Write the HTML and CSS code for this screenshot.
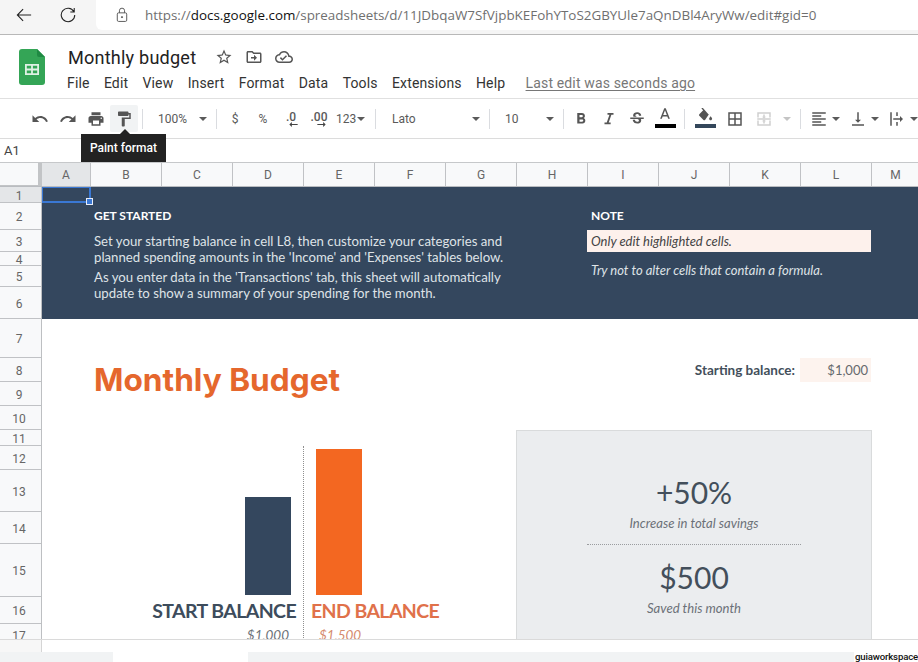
FILE: index.html
```html
<!DOCTYPE html>
<html lang="en">
<head>
<meta charset="utf-8">
<title>Monthly budget - Google Sheets</title>
<link rel="stylesheet" href="styles.css">
</head>
<body>
<div class="app">
  <header class="browser">
    <div class="nav">
      <svg class="nav-icon" viewBox="0 0 18 18"><path d="M17 9H1.5M8 2.5 1.5 9 8 15.5"/></svg>
      <svg class="nav-icon" viewBox="0 0 18 18"><path d="M15.6 5.2A7.6 7.6 0 1 0 16.6 9M16 1.2v4.4h-4.4"/></svg>
    </div>
    <div class="url">
      <svg class="lock" viewBox="0 0 14 18"><rect x="1.5" y="6.5" width="11" height="10" rx="1.5"/><path d="M4 6.5V4a3 3 0 0 1 6 0v2.5"/><circle cx="7" cy="11.5" r=".7"/></svg>
      <span class="url-text">https://<b>docs.google.com</b>/spreadsheets/d/11JDbqaW7SfVjpbKEFohYToS2GBYUle7aQnDBl4AryWw/edit#gid=0</span>
    </div>
  </header>

  <section class="doc">
    <svg class="logo" viewBox="0 0 26 36"><path class="logo-page" d="M3 0h15l8 8v25a3 3 0 0 1-3 3H3a3 3 0 0 1-3-3V3a3 3 0 0 1 3-3z"/><path class="logo-fold" d="M18 0l8 8h-6a2 2 0 0 1-2-2z"/><path class="logo-grid" d="M6 15h14v11H6zm1.8 1.8v2.8h4.3v-2.8zm6.1 0v2.8h4.3v-2.8zm-6.1 4.6v2.8h4.3v-2.8zm6.1 0v2.8h4.3v-2.8z"/></svg>
    <div class="doc-main">
      <div class="title-row">
        <h1 class="title">Monthly budget</h1>
        <svg class="title-icon star" viewBox="0 0 24 24"><path d="M22 9.24l-7.19-.62L12 2 9.19 8.63 2 9.24l5.46 4.73L5.82 21 12 17.27 18.18 21l-1.63-7.03L22 9.24zM12 15.4l-3.76 2.27 1-4.28-3.32-2.88 4.38-.38L12 6.1l1.71 4.04 4.38.38-3.32 2.88 1 4.28L12 15.4z"/></svg>
        <svg class="title-icon" viewBox="0 0 24 24"><path d="M20 6h-8l-2-2H4c-1.1 0-2 .9-2 2v12c0 1.1.9 2 2 2h16c1.1 0 2-.9 2-2V8c0-1.1-.9-2-2-2zm0 12H4V6h5.17l2 2H20v10zm-8-4H8v-2h4V9l4 4-4 4v-3z"/></svg>
        <svg class="title-icon" viewBox="0 0 24 24"><path d="M19.35 10.04C18.67 6.59 15.64 4 12 4 9.11 4 6.6 5.64 5.35 8.04 2.34 8.36 0 10.91 0 14c0 3.31 2.69 6 6 6h13c2.76 0 5-2.24 5-5 0-2.64-2.05-4.78-4.65-4.96zM19 18H6c-2.21 0-4-1.79-4-4 0-2.05 1.53-3.76 3.56-3.97l1.07-.11.5-.95C8.08 7.14 9.94 6 12 6c2.62 0 4.88 1.86 5.39 4.43l.3 1.5 1.53.11c1.56.1 2.78 1.41 2.78 2.96 0 1.65-1.35 3-3 3zm-9-3.82l-2.09-2.09L6.5 13.5 10 17l6.01-6.01-1.41-1.41z"/></svg>
      </div>
      <nav class="menu">
        <span>File</span><span>Edit</span><span>View</span><span>Insert</span><span>Format</span><span>Data</span><span>Tools</span><span>Extensions</span><span>Help</span>
        <a class="last-edit">Last edit was seconds ago</a>
      </nav>
    </div>
  </section>

  <section class="toolbar">
    <div class="tb"><svg viewBox="0 0 24 24"><path d="M12.5 8c-2.65 0-5.05.99-6.9 2.6L2 7v9h9l-3.62-3.62c1.39-1.16 3.16-1.88 5.12-1.88 3.54 0 6.55 2.31 7.6 5.5l2.37-.78C21.08 11.03 17.15 8 12.5 8z"/></svg></div>
    <div class="tb"><svg viewBox="0 0 24 24"><path d="M18.4 10.6C16.55 8.99 14.15 8 11.5 8c-4.65 0-8.58 3.03-9.96 7.22L3.9 16c1.05-3.19 4.05-5.5 7.6-5.5 1.95 0 3.73.72 5.12 1.88L13 16h9V7l-3.6 3.6z"/></svg></div>
    <div class="tb"><svg viewBox="0 0 24 24"><path d="M19 8H5c-1.66 0-3 1.34-3 3v6h4v4h12v-4h4v-6c0-1.66-1.34-3-3-3zm-3 11H8v-5h8v5zm3-7c-.55 0-1-.45-1-1s.45-1 1-1 1 .45 1 1-.45 1-1 1zm-1-9H6v4h12V3z"/></svg></div>
    <div class="tb tb-hover"><svg viewBox="0 0 24 24"><path d="M18 4V3c0-.55-.45-1-1-1H5c-.55 0-1 .45-1 1v4c0 .55.45 1 1 1h12c.55 0 1-.45 1-1V6h1v4H9v11c0 .55.45 1 1 1h2c.55 0 1-.45 1-1v-9h8V4h-3z"/></svg></div>
    <i class="sep sep-a"></i>
    <div class="tb-select tb-zoom"><span>100%</span><i class="caret"></i></div>
    <i class="sep"></i>
    <div class="tb tb-text tb-first">$</div>
    <div class="tb tb-text">%</div>
    <div class="tb tb-dec"><span>.0</span><svg viewBox="0 0 10 6"><path d="M10 2.4H3V0L0 3l3 3V3.6h7z"/></svg></div>
    <div class="tb tb-dec"><span>.00</span><svg viewBox="0 0 10 6"><path d="M0 2.4h7V0l3 3-3 3V3.6H0z"/></svg></div>
    <div class="tb-num"><span>123</span><i class="caret"></i></div>
    <i class="sep sep-a"></i>
    <div class="tb-select tb-font"><span>Lato</span><i class="caret"></i></div>
    <i class="sep"></i>
    <div class="tb-select tb-size"><span>10</span><i class="caret"></i></div>
    <i class="sep"></i>
    <div class="tb tb-bold"><svg viewBox="0 0 24 24"><path d="M15.6 10.79c.97-.67 1.65-1.77 1.65-2.79 0-2.26-1.75-4-4-4H7v14h7.04c2.09 0 3.71-1.7 3.71-3.79 0-1.52-.86-2.82-2.15-3.42zM10 6.5h3c.83 0 1.5.67 1.5 1.5s-.67 1.5-1.5 1.5h-3v-3zm3.5 9H10v-3h3.5c.83 0 1.5.67 1.5 1.5s-.67 1.5-1.5 1.5z"/></svg></div>
    <div class="tb"><svg viewBox="0 0 24 24"><path d="M10 4v2.4h2.6L9 16.6H6V19h8.2v-2.4h-2.6l3.6-10.2H18V4z"/></svg></div>
    <div class="tb"><svg viewBox="0 0 24 24"><path d="M6.85 7.08C6.85 4.37 9.45 3 12.24 3c1.64 0 3 .49 3.9 1.28.77.65 1.46 1.73 1.46 3.24h-3.01c0-.31-.05-.59-.15-.85-.29-.86-1.2-1.28-2.25-1.28-1.86 0-2.34 1.02-2.34 1.7 0 .48.25.88.74 1.21.38.25.77.48 1.41.7H7.39c-.21-.34-.54-.89-.54-1.92zM21 12v-2H3v2h9.62c1.15.45 1.96.75 1.96 1.97 0 1-.81 1.67-2.28 1.67-1.54 0-2.93-.54-2.93-2.51H6.4c0 .55.08 1.13.24 1.58.81 2.29 3.29 3.3 5.67 3.3 2.27 0 5.3-.89 5.3-4.05 0-.3-.01-1.16-.48-1.94H21V12z"/></svg></div>
    <div class="tb tb-color"><svg viewBox="0 0 24 18"><path d="M11 0 5.5 14h2.25l1.12-3h6.25l1.12 3h2.25L13 0h-2zM9.62 9 12 2.67 14.38 9H9.62z"/></svg><b class="swatch swatch-text"></b></div>
    <i class="sep sep-b"></i>
    <div class="tb tb-color tb-fill"><svg viewBox="0 0 24 18"><path d="M16.56 7.94 8.62-1 7.21.41l2.38 2.38-5.15 5.15c-.59.59-.59 1.54 0 2.12l5.5 5.5c.29.29.68.44 1.06.44s.77-.15 1.06-.44l4.5-6.5c.59-.58.59-.53 0-1.12zM19.5 10.5s-2 2.17-2 3.5c0 1.1.9 2 2 2s2-.9 2-2c0-1.33-2-3.5-2-3.5z"/></svg><b class="swatch swatch-fill"></b></div>
    <div class="tb tb-borders"><svg viewBox="0 0 24 24"><path d="M3 3v18h18V3H3zm8 16H5v-6h6v6zm0-8H5V5h6v6zm8 8h-6v-6h6v6zm0-8h-6V5h6v6z"/></svg></div>
    <div class="tb tb-off"><svg viewBox="0 0 24 24"><path d="M3 3h18v2H3zM3 19h18v2H3zM3 5h2v5H3zM19 5h2v5h-2zM3 14h2v5H3zM19 14h2v5h-2zM3 11h18v2H3zM11 6h2v3h2l-3 2-3-2h2zM11 18h2v-3h2l-3-2-3 2h2z"/></svg></div>
    <i class="caret caret-off"></i>
    <i class="sep sep-c"></i>
    <div class="tb tb-align"><svg viewBox="0 0 24 24"><path d="M15 15H3v2h12v-2zm0-8H3v2h12V7zM3 13h18v-2H3v2zm0 8h18v-2H3v2zM3 3v2h18V3H3z"/></svg></div>
    <i class="caret caret-tight"></i>
    <div class="tb tb-align"><svg viewBox="0 0 24 24"><path d="M16 13h-3V3h-2v10H8l4 4 4-4zM4 19v2h16v-2H4z"/></svg></div>
    <i class="caret caret-tight"></i>
    <div class="tb tb-align"><svg viewBox="0 0 24 24"><path d="M3 3h2v18H3zM11 3h2v5h-2zM11 16h2v5h-2zM7 11h9V8l4 4-4 4v-3H7z"/></svg></div>
    <i class="caret caret-tight"></i>
    <div class="tooltip">Paint format</div>
  </section>

  <section class="formula"><span>A1</span></section>

  <main class="sheet">
    <div class="colhead">
      <div class="corner"></div>
      <div class="ch ch-on">A</div><div class="ch">B</div><div class="ch">C</div><div class="ch">D</div><div class="ch">E</div><div class="ch">F</div><div class="ch">G</div><div class="ch">H</div><div class="ch">I</div><div class="ch">J</div><div class="ch">K</div><div class="ch">L</div><div class="ch">M</div>
    </div>
    <div class="sheet-body">
      <div class="rowhead">
        <div class="rh rh-on">1</div><div class="rh">2</div><div class="rh">3</div><div class="rh">4</div><div class="rh">5</div><div class="rh">6</div><div class="rh">7</div><div class="rh">8</div><div class="rh">9</div><div class="rh">10</div><div class="rh">11</div><div class="rh">12</div><div class="rh">13</div><div class="rh">14</div><div class="rh">15</div><div class="rh">16</div><div class="rh">17</div>
      </div>
      <div class="cells">
        <div class="banner"></div>
        <div class="selection"><i class="handle"></i></div>
        <h2 class="banner-head get-started">GET STARTED</h2>
        <p class="banner-text intro-one">Set your starting balance in cell L8, then customize your categories and planned spending amounts in the 'Income' and 'Expenses' tables below.</p>
        <p class="banner-text intro-two">As you enter data in the 'Transactions' tab, this sheet will automatically update to show a summary of your spending for the month.</p>
        <h2 class="banner-head note-head">NOTE</h2>
        <div class="note-highlight">Only edit highlighted cells.</div>
        <div class="note-text">Try not to alter cells that contain a formula.</div>

        <div class="page-title">Monthly Budget</div>
        <div class="balance-label">Starting balance:</div>
        <div class="balance-value">$1,000</div>

        <div class="divider-line"></div>
        <div class="bar bar-start"></div>
        <div class="bar bar-end"></div>
        <div class="chart-label label-start">START BALANCE</div>
        <div class="chart-label label-end">END BALANCE</div>
        <div class="chart-value value-start">$1,000</div>
        <div class="chart-value value-end">$1,500</div>

        <aside class="summary">
          <div class="summary-num">+50%</div>
          <div class="summary-cap">Increase in total savings</div>
          <div class="summary-rule"></div>
          <div class="summary-num summary-num-b">$500</div>
          <div class="summary-cap">Saved this month</div>
        </aside>
      </div>
    </div>
  </main>

  <div class="scroll-strip"><div class="strip-head"></div></div>
  <footer class="tabs"><div class="tab"></div></footer>
  <div class="watermark">guiaworkspace</div>
</div>
</body>
</html>
```

FILE: styles.css
```css
* { box-sizing: border-box; }
html, body { margin: 0; padding: 0; background: #fff; }
.app {
  --cols: repeat(11, 71px) 47px;
  --rows: 16px 27px 22px 14px 21px 32px 39px 24px 24px 24px 16px 24px 42px 32px 53px 27px 22px;
  position: relative;
  width: 918px;
  height: 662px;
  overflow: hidden;
  display: flex;
  flex-direction: column;
  font-family: Roboto, "Liberation Sans", sans-serif;
  color: #3c4043;
}

/* browser chrome */
.browser { height: 35px; flex: none; display: flex; background: #f5f5f5; border-bottom: 1px solid #b8b8b8; padding-bottom: 4px; }
.nav { width: 96px; flex: none; display: flex; align-items: center; padding-left: 16px; gap: 28px; }
.nav-icon { width: 16px; height: 16px; fill: none; stroke: #222; stroke-width: 1.2; }
.url { flex: 1; background: #fff; border-radius: 0 0 0 6px; display: flex; align-items: center; padding-left: 20px; }
.lock { width: 12px; height: 16px; fill: none; stroke: #555; stroke-width: 1.1; }
.lock circle { fill: #555; }
.url-text { margin-left: 17px; font-family: "Open Sans", sans-serif; font-size: 13.42px; color: #6f6f6f; white-space: nowrap; }
.url-text b { font-weight: 400; color: #111; }

/* document header */
.doc { height: 64px; flex: none; display: flex; padding: 14px 0 0 19px; border-bottom: 1px solid #e0e0e0; }
.logo { width: 26px; height: 36px; flex: none; }
.logo-page { fill: #34a556; }
.logo-fold { fill: #1f8a43; }
.logo-grid { fill: #dff1e4; fill-rule: evenodd; }
.doc-main { margin-left: 22px; margin-top: -2px; }
.title-row { display: flex; align-items: center; height: 20px; margin-left: 1px; }
.title { margin: 0; font-size: 18.1px; font-weight: 400; color: #222; width: 146px; white-space: nowrap; letter-spacing: .2px; }
.title-icon { width: 18px; height: 18px; fill: #555; margin-right: 12px; flex: none; }
.star { margin-left: 1px; }
.menu { display: flex; margin-top: 6px; font-size: 14px; line-height: 20px; color: #333; letter-spacing: .15px; }
.menu span { margin-right: 14.3px; }
.last-edit { margin-left: 6px; color: #777; text-decoration: underline; text-underline-offset: 2px; }

/* toolbar */
.toolbar { position: relative; height: 40px; flex: none; display: flex; align-items: center; padding-left: 26px; border-bottom: 1px solid #dcdcdc; font-size: 12px; color: #5a5a5a; }
.tb { width: 28px; height: 27px; flex: none; display: flex; align-items: center; justify-content: center; }
.tb svg { width: 18px; height: 18px; fill: #555; }
.tb-hover { background: #f1f3f4; border-radius: 2px; }
.sep { width: 1px; height: 20px; flex: none; background: #dadce0; }
.sep-a { margin-left: 4px; }
.sep-b { margin-left: 5px; }
.sep-c { margin-left: 9px; }
.caret { width: 0; height: 0; flex: none; border: 4px solid transparent; border-top-color: #5a5a5a; border-bottom: 0; }
.caret-off { border-top-color: #c4c4c4; margin-left: 5px; }
.caret-tight { margin-left: -1px; }
.tb-select { height: 27px; flex: none; display: flex; align-items: center; justify-content: space-between; padding-right: 9px; }
.tb-zoom { width: 73px; padding-left: 15px; }
.tb-font { width: 113px; padding-left: 16px; }
.tb-size { width: 73px; padding-left: 15px; }
.tb-text { font-size: 12px; }
.tb-first { margin-left: 4px; }
.tb-bold { margin-left: 3px; }
.tb-dec { flex-direction: column; font-weight: 500; line-height: 12px; }
.tb-dec svg { width: 9px; height: 5px; margin-top: -1px; margin-left: 4px; fill: #444; }
.tb-num { width: 38px; flex: none; display: flex; align-items: center; gap: 1px; padding-left: 3px; }
.tb-color { flex-direction: column; justify-content: flex-start; padding-top: 3px; }
.tb-color svg { height: 14px; width: 18px; }
.swatch { display: block; width: 21px; height: 4px; margin-top: 2px; }
.swatch-text { background: #000; }
.swatch-fill { background: #34475b; }
.tb-fill { margin-left: 6px; }
.tb-borders { margin-left: 2px; }
.tb-off { margin-left: 1px; }
.tb-off svg { fill: #cfcfcf; }
.tb-align { margin-left: 4px; }
.sep-c + .tb-align { margin-left: 4px; }
.tooltip { position: absolute; left: 81px; top: 35px; width: 85px; height: 28px; background: #222; color: #fff; font-size: 12px; font-weight: 500; line-height: 28px; text-align: center; z-index: 5; }
.tooltip::before { content: ""; position: absolute; left: 39px; top: -5px; border: 5px solid transparent; border-top: 0; border-bottom-color: #222; }

/* formula bar */
.formula { height: 23px; flex: none; padding-left: 4px; display: flex; align-items: center; font-size: 13px; color: #444; }

/* sheet */
.sheet { height: 478px; flex: none; overflow: hidden; border-bottom: 1px solid #dadada; }
.colhead { height: 25px; display: grid; grid-template-columns: 42px 49px var(--cols); background: #f8f9fa; border-top: 1px solid #c6c8ca; border-bottom: 1px solid #b9bcc0; }
.corner { background: #f8f9fa; border-right: 4px solid #c2c4c6; border-bottom: 1px solid #c2c4c6; }
.ch { display: flex; align-items: center; justify-content: center; font-size: 12px; color: #666; border-right: 1px solid #c0c2c5; }
.ch:last-child { border-right: 0; }
.ch-on { background: #e4e6e8; }
.sheet-body { display: flex; height: 453px; }
.rowhead { width: 42px; flex: none; display: grid; grid-template-rows: var(--rows); background: #f8f9fa; border-right: 1px solid #bdbfc2; }
.rh { display: flex; align-items: center; justify-content: center; font-size: 12px; color: #666; border-bottom: 1px solid #c0c2c5; padding: 2px 3px 0 0; }
.rh-on { background: #e4e6e8; }
.cells { flex: 1; display: grid; grid-template-columns: 48px var(--cols); grid-template-rows: var(--rows); font-family: Lato, sans-serif; }

.banner { grid-column: 1 / -1; grid-row: 1 / 7; background: #34475e; }
.selection { position: relative; grid-column: 1; grid-row: 1; border: 2px solid #3a78d4; border-top-width: 1px; border-left-width: 1px; margin-right: -1px; }
.handle { position: absolute; right: -4px; bottom: -4px; width: 7px; height: 7px; background: #3a78d4; border: 1px solid #e8eefa; }
.banner-head { margin: 0; font-size: 12px; font-weight: 700; color: #fff; align-self: center; padding: 0 0 3px 4px; white-space: nowrap; }
.get-started { grid-column: 2 / 6; grid-row: 2; }
.note-head { grid-column: 9 / 13; grid-row: 2; }
.banner-text { margin: 0; font-size: 13.2px; line-height: 16px; color: #dfe3e7; padding-left: 4px; }
.intro-one { grid-column: 2 / 9; grid-row: 3 / 5; padding-top: 3px; width: 424px; }
.intro-two { grid-column: 2 / 9; grid-row: 5 / 7; padding-top: 3px; width: 424px; }
.note-highlight { grid-column: 9 / 13; grid-row: 3; background: #fdf1ec; font-size: 13px; font-style: italic; color: #444; display: flex; align-items: center; padding-left: 4px; }
.note-text { grid-column: 9 / 13; grid-row: 4 / 6; font-size: 13px; font-style: italic; color: #dfe3e7; display: flex; align-items: center; padding-left: 4px; }

.page-title { grid-column: 2 / 7; grid-row: 8 / 10; align-self: center; padding-left: 4px; font-family: Inter, Lato, sans-serif; font-size: 31.6px; font-weight: 700; color: #e5672d; white-space: nowrap; margin-top: -6px; }
.balance-label { grid-column: 8 / 12; grid-row: 8; align-self: center; text-align: right; padding-right: 5px; font-size: 13.5px; font-weight: 700; color: #434f5b; }
.balance-value { grid-column: 12; grid-row: 8; background: #fdf3ee; font-size: 13px; color: #66696d; text-align: right; padding-right: 3px; line-height: 24px; }

.divider-line { grid-column: 5; grid-row: 12 / 18; border-left: 1px dotted #8f8f8f; }
.bar { width: 46px; align-self: end; justify-self: center; grid-row: 12 / 16; margin-bottom: 2px; }
.bar-start { grid-column: 4; height: 98px; background: #34475e; }
.bar-end { grid-column: 5; height: 146px; background: #f36721; }
.chart-label { grid-row: 16; align-self: center; font-size: 19.5px; font-weight: 700; letter-spacing: -.6px; white-space: nowrap; }
.label-start { grid-column: 2 / 5; text-align: right; padding-right: 7px; color: #3d4c5c; }
.label-end { grid-column: 5 / 8; padding-left: 8px; color: #e0714a; }
.chart-value { grid-row: 17; align-self: center; font-size: 13.5px; font-style: italic; white-space: nowrap; }
.value-start { grid-column: 4; text-align: right; padding-right: 14px; color: #6b7178; }
.value-end { grid-column: 5; padding-left: 16px; color: #d58a6e; }

.summary { grid-column: 8 / 13; grid-row: 11 / 18; background: #ebedef; border: 1px solid #d9dbdc; display: flex; flex-direction: column; align-items: center; padding-top: 39px; height: 240px; margin-right: -1px; }
.summary-num { height: 44px; line-height: 44px; font-size: 30px; font-weight: 400; color: #434f5b; }
.summary-cap { height: 18px; line-height: 18px; font-size: 13.1px; font-style: italic; color: #6b7178; }
.summary-rule { width: 214px; margin-top: 12px; border-top: 1px dotted #9a9c9f; }
.summary-num-b { margin-top: 10px; }

/* bottom */
.scroll-strip { height: 12px; flex: none; background: #fff; }
.strip-head { width: 42px; height: 12px; background: #f7f7f7; border-right: 1px solid #d5d5d5; }
.tabs { flex: 1; background: #f1f3f4; padding-left: 113px; }
.tab { width: 135px; height: 10px; background: #fff; }
.watermark { position: absolute; right: 0; bottom: 0; width: 64px; height: 11px; background: #fff; font-size: 9.6px; font-weight: 500; letter-spacing: -.15px; line-height: 11px; color: #111; text-align: right; white-space: nowrap; }
```
